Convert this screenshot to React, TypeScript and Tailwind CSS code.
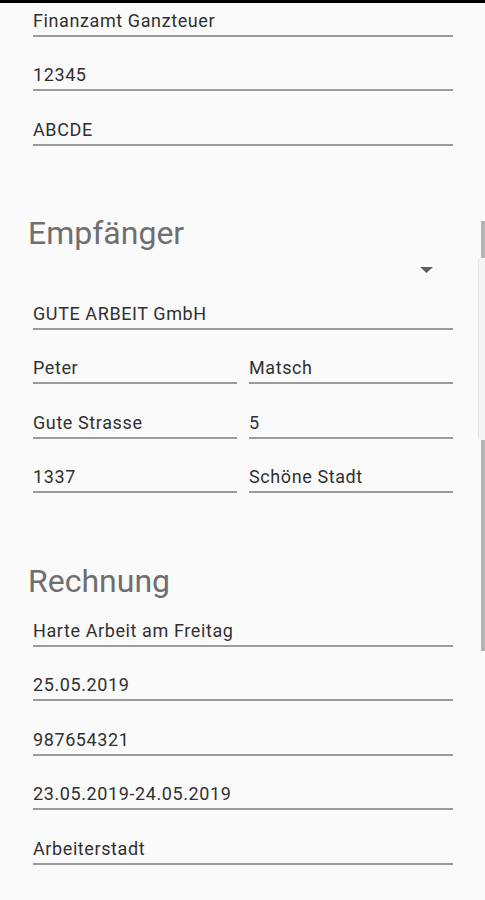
import React from "react";

type FieldProps = { value: string; h?: string };

function Field({ value, h = "h-[54.5px]" }: FieldProps) {
  return (
    <div className={`${h} flex flex-col justify-end`}>
      <div className="pb-[4px] border-b-2 border-[#9c9c9c] text-[18px] leading-[20px] tracking-[0.6px] text-[#303030] whitespace-nowrap">
        {value}
      </div>
    </div>
  );
}

function SectionTitle({ title }: { title: string }) {
  return (
    <div className="pt-[68.5px] pl-[28px] text-[32px] leading-[38px] text-[#6f6f6f]">{title}</div>
  );
}

export default function App() {
  return (
    <div
      className="relative w-[485px] h-[900px] overflow-hidden bg-[#fafafa] border-t-[3px] border-black"
      style={{ fontFamily: "Roboto, 'Liberation Sans', sans-serif" }}
    >
      {/* Absender */}
      <div className="pl-[33px] pr-[32px]">
        <Field value="Finanzamt Ganzteuer" h="h-[33.5px]" />
        <Field value="12345" />
        <Field value="ABCDE" />
      </div>

      {/* Empfänger */}
      <SectionTitle title="Empfänger" />
      <div className="pl-[33px] pr-[32px]">
        <div className="h-[23px] flex justify-end pr-[20px] pt-[15px]">
          <svg width="13" height="6" viewBox="0 0 13 6">
            <path d="M0 0 L13 0 L6.5 6 Z" fill="#5f5f5f" />
          </svg>
        </div>
        <Field value="GUTE ARBEIT GmbH" />
        <div className="grid grid-cols-2 gap-x-[12px]">
          <Field value="Peter" />
          <Field value="Matsch" />
          <Field value="Gute Strasse" />
          <Field value="5" />
          <Field value="1337" />
          <Field value="Schöne Stadt" />
        </div>
      </div>

      {/* Rechnung */}
      <SectionTitle title="Rechnung" />
      <div className="pl-[33px] pr-[32px]">
        <Field value="Harte Arbeit am Freitag" h="h-[47px]" />
        <Field value="25.05.2019" />
        <Field value="987654321" />
        <Field value="23.05.2019-24.05.2019" />
        <Field value="Arbeiterstadt" />
      </div>

      {/* scroll indicator overlay */}
      <div className="absolute right-0 top-[218px] w-[4px] h-[430px] bg-[#b4b4b4]" />
      <div className="absolute right-0 top-[255px] w-[7px] h-[182px] bg-[#f4f4f4] rounded-l-[4px] border-l border-[#e2e2e2]" />
    </div>
  );
}
